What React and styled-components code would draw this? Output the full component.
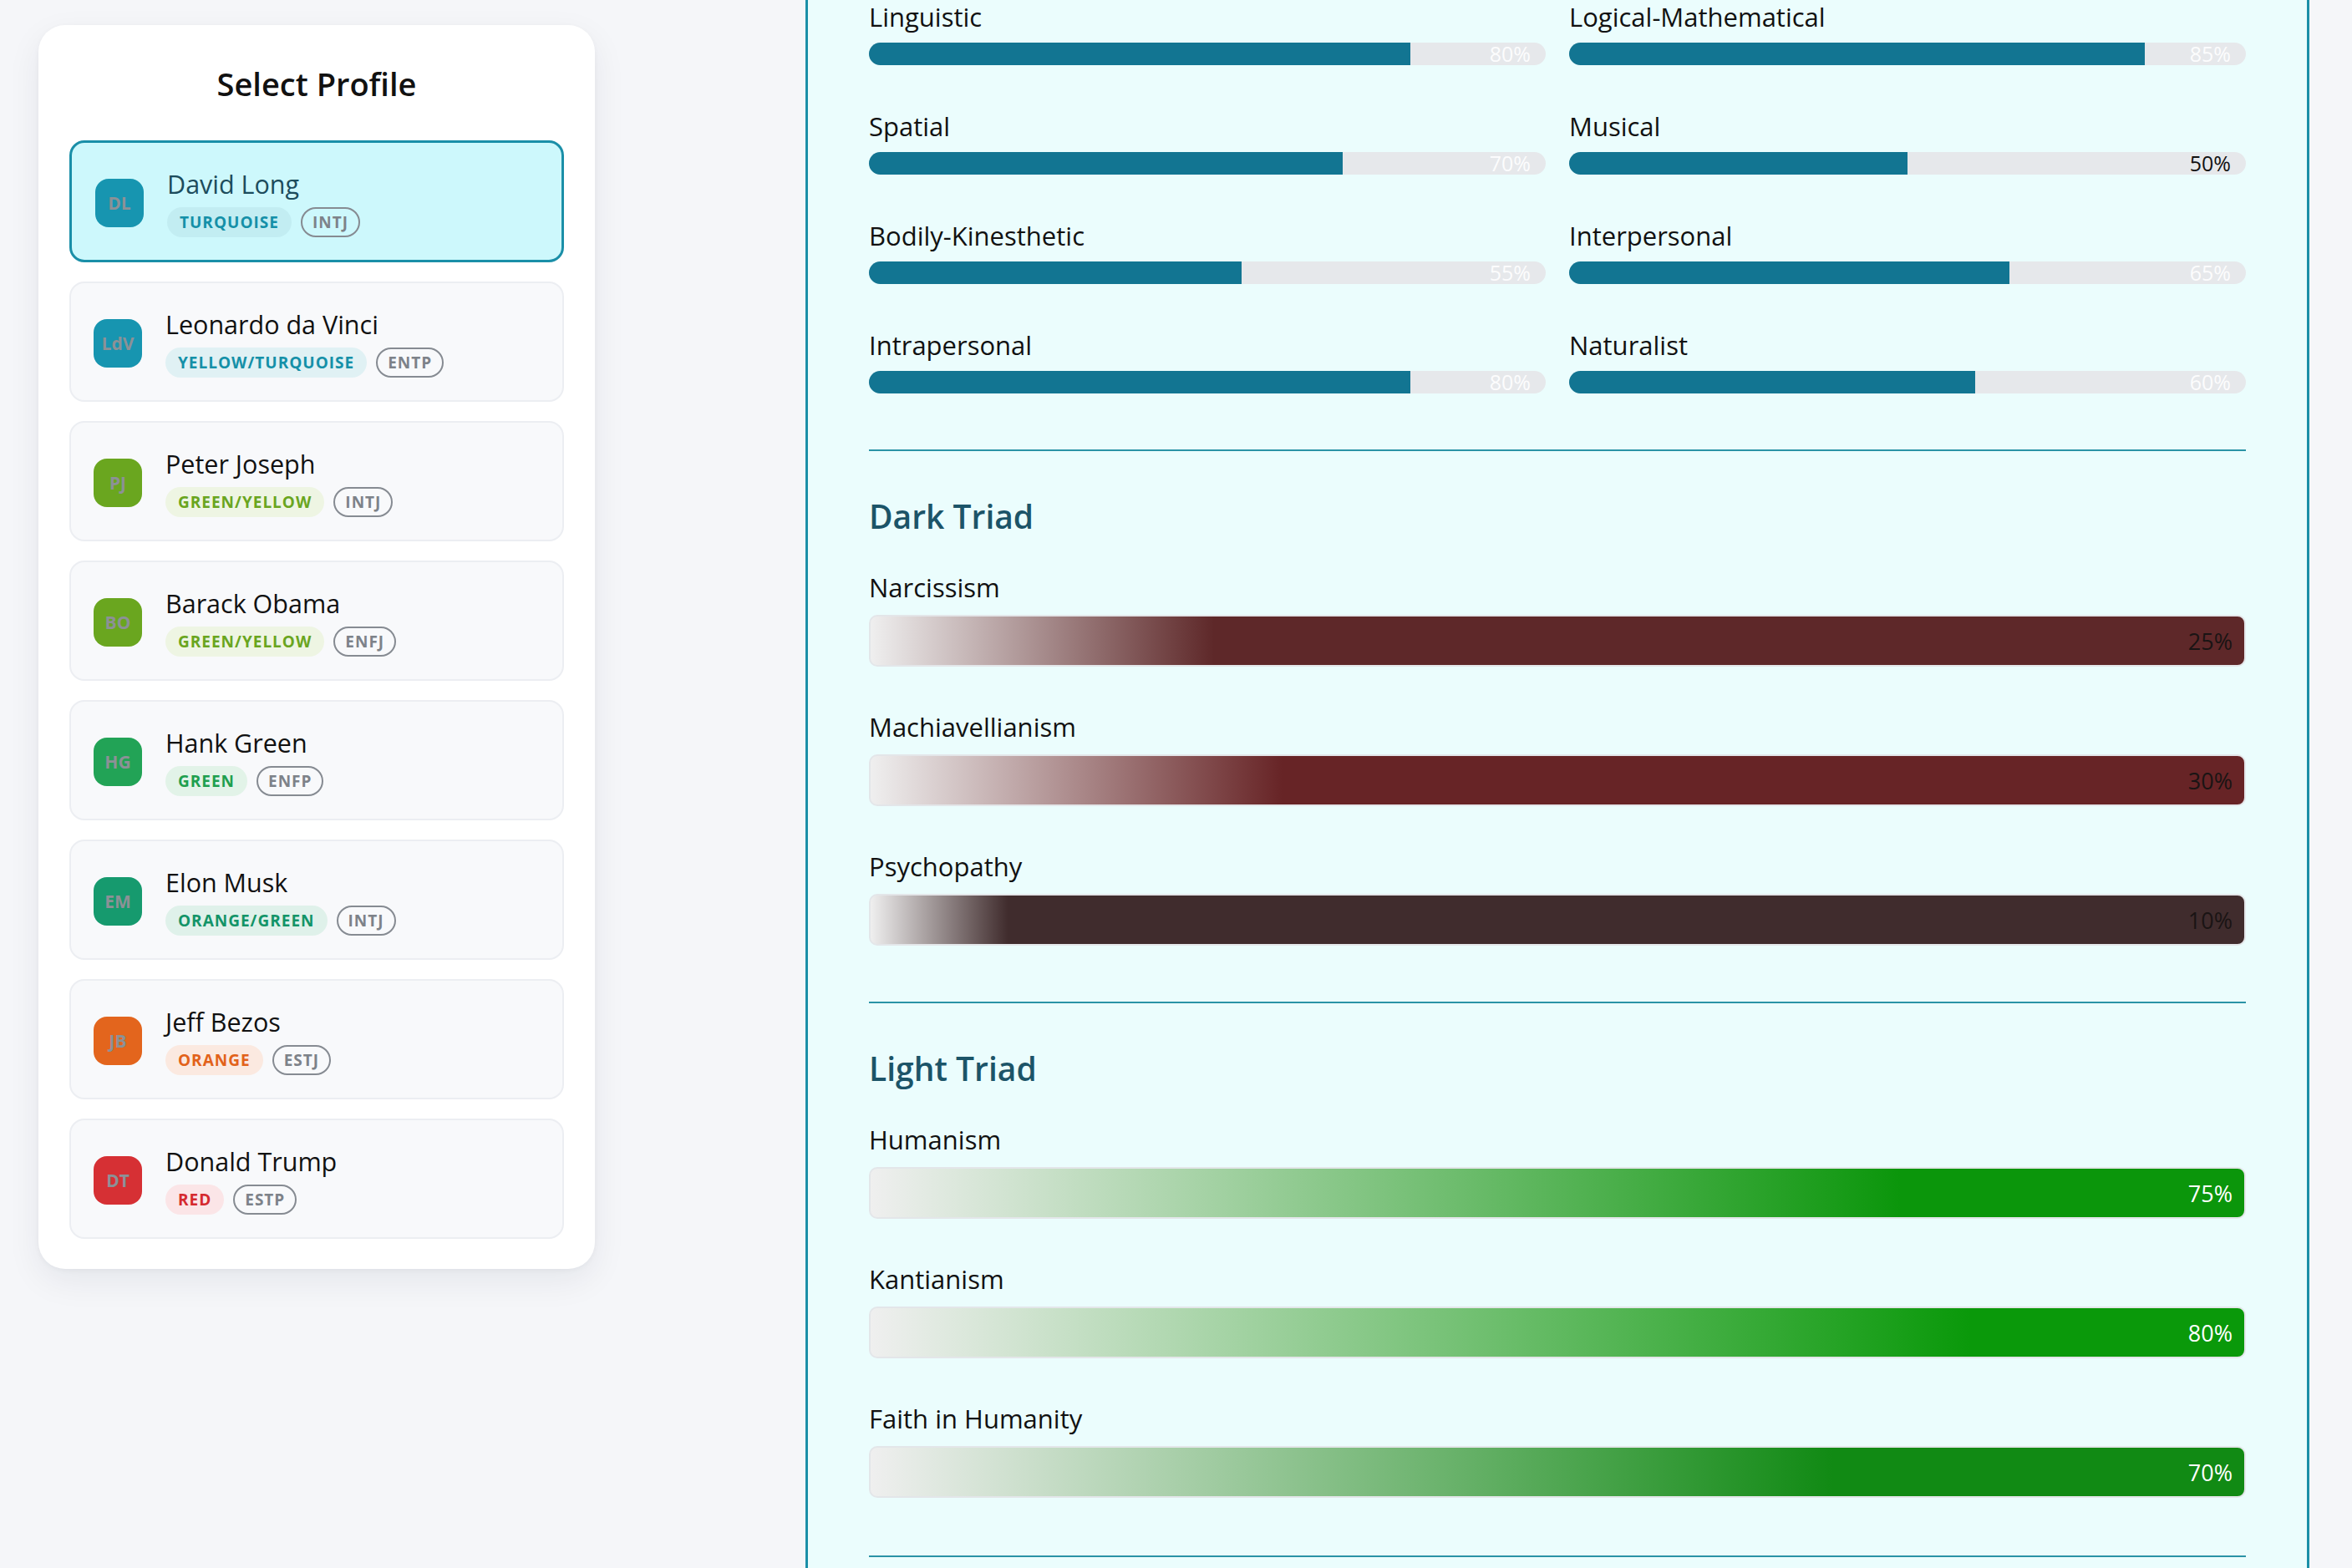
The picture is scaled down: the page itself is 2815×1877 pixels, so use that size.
import React from "react";
import styled, { createGlobalStyle } from "styled-components";

const GlobalStyle = createGlobalStyle`
  html, body {
    margin: 0;
    padding: 0;
    background: #f5f6f9;
    font-family: "Open Sans", "Noto Sans", sans-serif;
    color: #111;
    overflow: hidden;
  }
  * { box-sizing: border-box; }
`;

const Page = styled.div`
  display: flex;
  align-items: flex-start;
  gap: 252px;
  padding-left: 46px;
  height: 1877px;
  overflow: hidden;
`;

const Sidebar = styled.aside`
  flex: none;
  width: 666px;
  margin-top: 30px;
  padding: 47px 37px 36px;
  background: #ffffff;
  border-radius: 32px;
  box-shadow: 0 14px 40px rgba(20, 30, 50, 0.07), 0 2px 6px rgba(20, 30, 50, 0.04);
`;

const SidebarTitle = styled.h2`
  margin: 0 0 44px;
  text-align: center;
  font-size: 38px;
  line-height: 47px;
  font-weight: 600;
  color: #111;
`;

const CardList = styled.div`
  display: flex;
  flex-direction: column;
  gap: 23px;
`;

const Card = styled.div`
  display: flex;
  align-items: center;
  gap: 28px;
  padding: 30px 27px 27px ${(p) => (p.$active ? "28px" : "27px")};
  border-radius: 18px;
  border: ${(p) => (p.$active ? "3px solid #1a8fa8" : "2px solid #eceef2")};
  background: ${(p) => (p.$active ? "#cdf8fc" : "#f8f9fb")};
`;

const Avatar = styled.div`
  flex: none;
  width: 58px;
  height: 58px;
  border-radius: 16px;
  background: ${(p) => p.$bg};
  display: flex;
  align-items: center;
  justify-content: center;
  font-size: 21px;
  font-weight: 700;
  color: #8c9196;
`;

const CardText = styled.div`
  display: flex;
  flex-direction: column;
  gap: 8px;
`;

const Name = styled.div`
  font-size: 30.5px;
  line-height: 39px;
  color: ${(p) => (p.$active ? "#1c4c5c" : "#111")};
`;

const TagRow = styled.div`
  display: flex;
  gap: 11px;
`;

const Tag = styled.span`
  height: 36px;
  display: inline-flex;
  align-items: center;
  padding: 0 15px;
  border-radius: 18px;
  font-size: 19px;
  font-weight: 700;
  letter-spacing: 1px;
  color: ${(p) => p.$fg};
  background: ${(p) => p.$bg};
`;

const TypeTag = styled.span`
  height: 36px;
  display: inline-flex;
  align-items: center;
  padding: 0 12px;
  border-radius: 18px;
  border: 2px solid #868b92;
  font-size: 19px;
  font-weight: 700;
  letter-spacing: 1px;
  color: #7d8289;
`;

const Main = styled.main`
  flex: none;
  width: 1800px;
  min-height: 2100px;
  padding: 1px 73px 200px;
  background: #ebfdfd;
  border-left: 3px solid #1a8fa8;
  border-right: 3px solid #1a8fa8;
`;

const IntelGrid = styled.div`
  display: grid;
  grid-template-columns: 1fr 1fr;
  column-gap: 28px;
  row-gap: 54px;
`;

const Label = styled.div`
  font-size: 31px;
  line-height: 38px;
  color: #111;
`;

const IntelItem = styled.div`
  display: flex;
  flex-direction: column;
  gap: 12px;
`;

const Track = styled.div`
  position: relative;
  height: 27px;
  border-radius: 14px;
  background: #e6e8eb;
`;

const Fill = styled.div`
  height: 100%;
  border-radius: 14px 0 0 14px;
  background: #127592;
`;

const TrackValue = styled.span`
  position: absolute;
  right: 18px;
  top: 0;
  line-height: 27px;
  font-size: 25px;
  color: ${(p) => (p.$dark ? "#111" : "rgba(255,255,255,0.92)")};
`;

const Divider = styled.hr`
  margin: ${(p) => p.$top}px 0 0;
  border: none;
  height: 2px;
  background: #2a93a6;
`;

const SectionTitle = styled.h3`
  margin: 54px 0 42px;
  font-size: 39px;
  line-height: 48px;
  font-weight: 600;
  color: #1c5468;
`;

const TriadList = styled.div`
  display: flex;
  flex-direction: column;
  gap: 53px;
`;

const TriadItem = styled.div`
  display: flex;
  flex-direction: column;
  gap: 14px;
`;

const TriadBar = styled.div`
  height: 62px;
  border-radius: 10px;
  border: 2px solid #e3e6e9;
  display: flex;
  align-items: center;
  justify-content: flex-end;
  padding-right: 14px;
  font-size: 27px;
  color: ${(p) => p.$text};
`;

const profiles = [
  { initials: "DL", name: "David Long", color: "TURQUOISE", type: "INTJ", av: "#1795b0", fg: "#1590a8", bg: "#c2edf2", active: true },
  { initials: "LdV", name: "Leonardo da Vinci", color: "YELLOW/TURQUOISE", type: "ENTP", av: "#1795b0", fg: "#1590a8", bg: "#e0f1f4" },
  { initials: "PJ", name: "Peter Joseph", color: "GREEN/YELLOW", type: "INTJ", av: "#6aa61f", fg: "#6aa51f", bg: "#eef5e3" },
  { initials: "BO", name: "Barack Obama", color: "GREEN/YELLOW", type: "ENFJ", av: "#6aa61f", fg: "#6aa51f", bg: "#eef5e3" },
  { initials: "HG", name: "Hank Green", color: "GREEN", type: "ENFP", av: "#22a356", fg: "#1f9f4f", bg: "#e2f3e8" },
  { initials: "EM", name: "Elon Musk", color: "ORANGE/GREEN", type: "INTJ", av: "#169a6e", fg: "#139468", bg: "#dff1ea" },
  { initials: "JB", name: "Jeff Bezos", color: "ORANGE", type: "ESTJ", av: "#e3651d", fg: "#e2621a", bg: "#fbe9e0" },
  { initials: "DT", name: "Donald Trump", color: "RED", type: "ESTP", av: "#d63034", fg: "#d52a2f", bg: "#fbe5e7" },
];

const intelligences = [
  { name: "Linguistic", v: 80 },
  { name: "Logical-Mathematical", v: 85 },
  { name: "Spatial", v: 70 },
  { name: "Musical", v: 50, dark: true },
  { name: "Bodily-Kinesthetic", v: 55 },
  { name: "Interpersonal", v: 65 },
  { name: "Intrapersonal", v: 80 },
  { name: "Naturalist", v: 60 },
];

const dark = [
  { name: "Narcissism", v: 25, c: "#5e2829" },
  { name: "Machiavellianism", v: 30, c: "#672426" },
  { name: "Psychopathy", v: 10, c: "#402c2d" },
];

const light = [
  { name: "Humanism", v: 75, c: "#0b960b" },
  { name: "Kantianism", v: 80, c: "#0a990a" },
  { name: "Faith in Humanity", v: 70, c: "#118a14" },
];

function Triad({ title, items, text }) {
  return (
    <>
      <SectionTitle>{title}</SectionTitle>
      <TriadList>
        {items.map((it) => (
          <TriadItem key={it.name}>
            <Label>{it.name}</Label>
            <TriadBar
              $text={text}
              style={{
                background: `linear-gradient(90deg, #efefef 0%, ${it.c} ${it.v}%, ${it.c} 100%)`,
              }}
            >
              {it.v}%
            </TriadBar>
          </TriadItem>
        ))}
      </TriadList>
    </>
  );
}

export default function App() {
  return (
    <>
      <GlobalStyle />
      <Page>
        <Sidebar>
          <SidebarTitle>Select Profile</SidebarTitle>
          <CardList>
            {profiles.map((p) => (
              <Card key={p.name} $active={p.active}>
                <Avatar $bg={p.av}>{p.initials}</Avatar>
                <CardText>
                  <Name $active={p.active}>{p.name}</Name>
                  <TagRow>
                    <Tag $fg={p.fg} $bg={p.bg}>{p.color}</Tag>
                    <TypeTag>{p.type}</TypeTag>
                  </TagRow>
                </CardText>
              </Card>
            ))}
          </CardList>
        </Sidebar>
        <Main>
          <IntelGrid>
            {intelligences.map((it) => (
              <IntelItem key={it.name}>
                <Label>{it.name}</Label>
                <Track>
                  <Fill style={{ width: `${it.v}%` }} />
                  <TrackValue $dark={it.dark}>{it.v}%</TrackValue>
                </Track>
              </IntelItem>
            ))}
          </IntelGrid>
          <Divider $top={67} />
          <Triad title="Dark Triad" items={dark} text="#1a1414" />
          <Divider $top={67} />
          <Triad title="Light Triad" items={light} text="#ffffff" />
          <Divider $top={69} />
        </Main>
      </Page>
    </>
  );
}
